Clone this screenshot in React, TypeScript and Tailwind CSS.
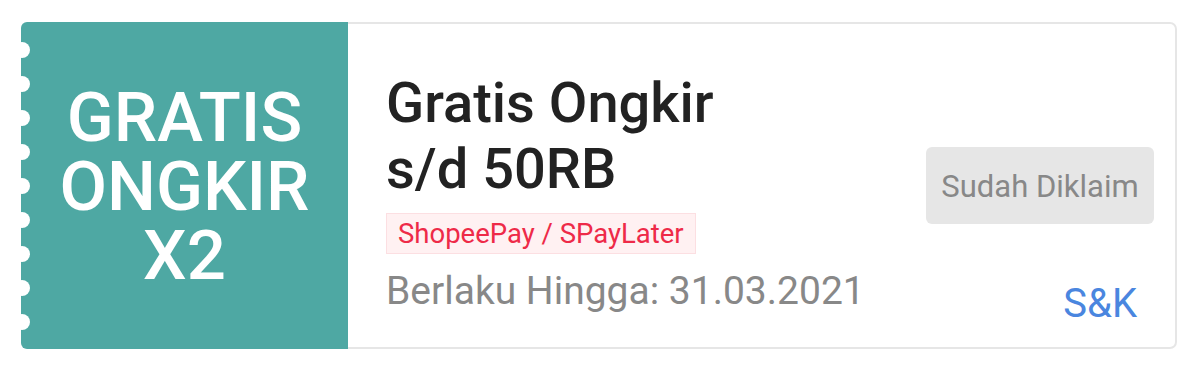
const dots = [0, 1, 2, 3, 4, 5, 6, 7, 8]

export default function App() {
  return (
    <div className="w-[1200px] h-[372px] bg-white pl-[21px] pt-[22px] font-['Roboto',sans-serif]">
      <div className="flex w-[1156px] h-[327px]">
        {/* left stub */}
        <div className="relative w-[327px] h-full shrink-0 rounded-l-[6px] bg-[#4ea8a3] flex items-center justify-center">
          <div className="absolute left-[-7px] top-[20px] flex flex-col gap-[18px]">
            {dots.map((d) => (
              <div key={d} className="w-[16px] h-[16px] rounded-full bg-white" />
            ))}
          </div>
          <div className="text-white text-center text-[69px] font-medium leading-[69px] pt-[2px]">
            <div>GRATIS</div>
            <div>ONGKIR</div>
            <div>X2</div>
          </div>
        </div>

        {/* body */}
        <div className="flex flex-1 border-2 border-l-0 border-[#e6e6e6] rounded-r-[7px]">
          <div className="flex-1 pl-[38px] pt-[46px]">
            <div className="text-[56px] leading-[66px] font-medium text-[#222222]">
              <div>Gratis Ongkir</div>
              <div>s/d 50RB</div>
            </div>
            <div className="mt-[11px] inline-block border border-[#fcdfe2] bg-[#fff1f2] px-[11px] py-[3px] text-[27.5px] leading-[33px] text-[#ee2a48]">
              ShopeePay / SPayLater
            </div>
            <div className="mt-[13px] text-[39px] leading-[48px] text-[#888888]">
              Berlaku Hingga: 31.03.2021
            </div>
          </div>
          <div className="grid grid-rows-[1fr_auto_1fr] pr-[21px]">
            <div />
            <div className="w-[228px] h-[77px] rounded-[6px] bg-[#e6e6e6] flex items-center justify-center pt-[3px] text-[31px] text-[#888888]">
              Sudah Diklaim
            </div>
            <div className="flex items-end justify-end pr-[17px] pb-[19px]">
              <span className="text-[40px] leading-[48px] text-[#4a86df]">S&amp;K</span>
            </div>
          </div>
        </div>
      </div>
    </div>
  )
}
